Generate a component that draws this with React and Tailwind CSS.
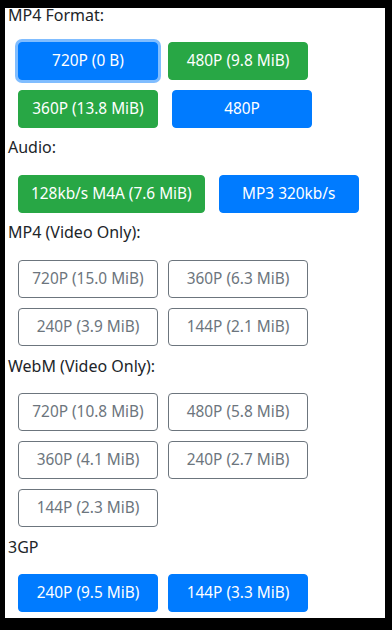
import React from 'react';

const solid = {
  blue: 'bg-[#007bff] border-[#007bff] text-white',
  green: 'bg-[#28a745] border-[#28a745] text-white',
  outline: 'bg-white border-[#6c757d] text-[#6c757d]',
};

const Btn = ({ label, kind = 'blue', focus = false, extra = '' }) => (
  <button
    className={`h-[38px] min-w-[140px] px-3 rounded-[4px] border text-[15.4px] leading-6 whitespace-nowrap ${solid[kind]} ${
      focus ? 'ring-[3px] ring-[#80bdff]' : ''
    } ${extra}`}
  >
    {label}
  </button>
);

const Label = ({ children, mt = '', lh = 'h-6 leading-6' }) => (
  <div className={`${lh} text-[16px] text-[#212529] pl-[3px] ${mt}`}>{children}</div>
);

const Row = ({ children, mt = 'mt-[10px]' }) => (
  <div className={`flex pl-[13px] gap-[10px] ${mt}`}>{children}</div>
);

export default function App() {
  return (
    <div
      className="bg-black w-[392px] h-[630px] pt-[8px] pl-[5px] pr-[7px] pb-[12px]"
      style={{ fontFamily: '"Noto Sans", "Open Sans", sans-serif' }}
    >
      <div className="bg-white h-full">
        <Label lh="h-[14px] leading-[14px]">MP4 Format:</Label>
        <Row mt="mt-[20px]">
          <Btn label="720P (0 B)" focus />
          <Btn label="480P (9.8 MiB)" kind="green" />
        </Row>
        <Row>
          <Btn label="360P (13.8 MiB)" kind="green" />
          <Btn label="480P" extra="ml-[4px]" />
        </Row>

        <Label mt="mt-[7px]">Audio:</Label>
        <Row mt="mt-[16px]">
          <Btn label="128kb/s M4A (7.6 MiB)" kind="green" />
          <Btn label="MP3 320kb/s" extra="ml-[4px]" />
        </Row>

        <Label mt="mt-[7px]">MP4 (Video Only):</Label>
        <Row mt="mt-[16px]">
          <Btn label="720P (15.0 MiB)" kind="outline" />
          <Btn label="360P (6.3 MiB)" kind="outline" />
        </Row>
        <Row>
          <Btn label="240P (3.9 MiB)" kind="outline" />
          <Btn label="144P (2.1 MiB)" kind="outline" />
        </Row>

        <Label mt="mt-[8px]">WebM (Video Only):</Label>
        <Row mt="mt-[15px]">
          <Btn label="720P (10.8 MiB)" kind="outline" />
          <Btn label="480P (5.8 MiB)" kind="outline" />
        </Row>
        <Row>
          <Btn label="360P (4.1 MiB)" kind="outline" />
          <Btn label="240P (2.7 MiB)" kind="outline" />
        </Row>
        <Row>
          <Btn label="144P (2.3 MiB)" kind="outline" />
        </Row>

        <Label mt="mt-[8px]">3GP</Label>
        <Row mt="mt-[15px]">
          <Btn label="240P (9.5 MiB)" />
          <Btn label="144P (3.3 MiB)" />
        </Row>
      </div>
    </div>
  );
}
